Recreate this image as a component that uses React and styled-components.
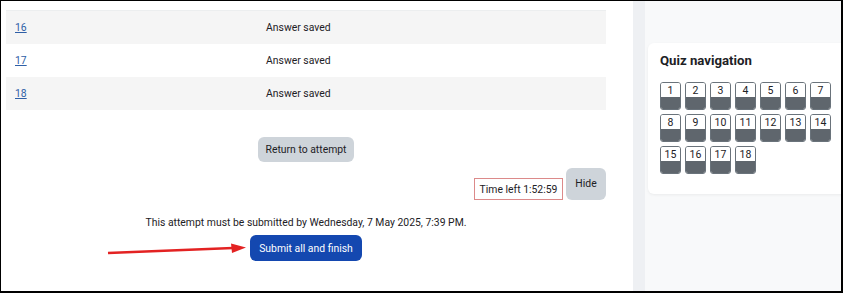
import styled, { createGlobalStyle } from "styled-components";

const GlobalStyle = createGlobalStyle`
  * { box-sizing: border-box; }
  body {
    margin: 0;
    font-family: Roboto, "Liberation Sans", sans-serif;
    color: #1d2125;
  }
`;

const rows = [16, 17, 18];
const questions = Array.from({ length: 18 }, (_, i) => i + 1);

function App() {
  return (
    <>
      <GlobalStyle />
      <Frame>
        <Main>
          <SummaryTable>
            {rows.map((n, i) => (
              <Row key={n} striped={i % 2 === 0}>
                <QuestionCell>
                  <QuestionLink href="#">{n}</QuestionLink>
                </QuestionCell>
                <StatusCell>Answer saved</StatusCell>
              </Row>
            ))}
          </SummaryTable>

          <Centered>
            <SecondaryButton>Return to attempt</SecondaryButton>
          </Centered>

          <TimerRow>
            <TimerBox>Time left 1:52:59</TimerBox>
            <HideButton>Hide</HideButton>
          </TimerRow>

          <Deadline>
            This attempt must be submitted by Wednesday, 7 May 2025, 7:39 PM.
          </Deadline>

          <Centered>
            <PrimaryButton>Submit all and finish</PrimaryButton>
          </Centered>

          <Arrow width="140" height="14" viewBox="0 0 140 14">
            <line x1="1" y1="10" x2="126" y2="5" stroke="#e32222" strokeWidth="2.4" />
            <polygon points="124,0.5 139,4.5 125,10" fill="#e32222" />
          </Arrow>
        </Main>

        <Drawer>
          <NavCard>
            <NavTitle>Quiz navigation</NavTitle>
            <NavGrid>
              {questions.map((q) => (
                <NavButton key={q}>
                  <NavNumber>{q}</NavNumber>
                  <NavState />
                </NavButton>
              ))}
            </NavGrid>
          </NavCard>
        </Drawer>
      </Frame>
    </>
  );
}

/* ---------------- Styled Components ---------------- */

const Frame = styled.div`
  width: 843px;
  height: 293px;
  display: flex;
  border-style: solid;
  border-color: #000;
  border-width: 1px 2px 2px 1px;
  overflow: hidden;
`;

const Main = styled.div`
  position: relative;
  width: 632px;
  flex-shrink: 0;
  background: #fff;
  padding: 9px 27px 0 5px;
  display: flex;
  flex-direction: column;
  font-size: 10.4px;
`;

const SummaryTable = styled.div`
  display: flex;
  flex-direction: column;
  border-top: 1px solid #eceeef;
`;

const Row = styled.div`
  display: grid;
  grid-template-columns: 251px 1fr;
  align-items: center;
  height: 33px;
  background: ${(p) => (p.striped ? "#f5f5f5" : "#fff")};
`;

const QuestionCell = styled.div`
  padding-left: 9px;
`;

const QuestionLink = styled.a`
  color: #2f5fa6;
  text-decoration: underline;
`;

const StatusCell = styled.div`
  padding-left: 9px;
  color: #1d2125;
`;

const Centered = styled.div`
  display: flex;
  justify-content: center;
`;

const SecondaryButton = styled.button`
  margin-top: 27px;
  height: 25px;
  padding: 0 8px;
  border: none;
  border-radius: 6px;
  background: #ced4da;
  color: #1d2125;
  font-family: inherit;
  font-size: 10.4px;
`;

const TimerRow = styled.div`
  display: flex;
  justify-content: flex-end;
  align-items: flex-end;
  gap: 3px;
  margin-top: 6px;
`;

const TimerBox = styled.div`
  height: 22px;
  width: 89px;
  display: flex;
  align-items: center;
  justify-content: center;
  white-space: nowrap;
  border: 1px solid #dc8a8a;
  font-size: 10.4px;
`;

const HideButton = styled.button`
  width: 40px;
  height: 32px;
  border: none;
  border-radius: 6px;
  background: #ced4da;
  color: #1d2125;
  font-family: inherit;
  font-size: 10.4px;
  padding-bottom: 2px;
`;

const Deadline = styled.div`
  margin-top: 14px;
  line-height: 18px;
  text-align: center;
`;

const PrimaryButton = styled.button`
  margin-top: 3px;
  height: 26px;
  padding: 0 9px;
  border: none;
  border-radius: 6px;
  background: #1448b0;
  color: #fff;
  font-family: inherit;
  font-size: 10.4px;
`;

const Arrow = styled.svg`
  position: absolute;
  left: 106px;
  top: 242px;
`;

const Drawer = styled.div`
  flex: 1;
  background: #f8f9fa;
  border-left: 12px solid #eef0f3;
  padding: 42px 0 0 3px;
  overflow: hidden;
`;

const NavCard = styled.div`
  width: 230px;
  height: 151px;
  background: #fff;
  border-radius: 6px;
  box-shadow: 0 1px 3px rgba(0, 0, 0, 0.06);
  padding: 9px 12px 0;
`;

const NavTitle = styled.h3`
  margin: 0 0 12px;
  font-size: 13.2px;
  line-height: 18px;
  font-weight: 700;
  color: #1d2125;
`;

const NavGrid = styled.div`
  display: grid;
  grid-template-columns: repeat(7, 21px);
  gap: 4px;
`;

const NavButton = styled.div`
  height: 28px;
  border: 1px solid #6a737b;
  border-radius: 3px;
  overflow: hidden;
  display: flex;
  flex-direction: column;
`;

const NavNumber = styled.div`
  height: 14px;
  display: flex;
  align-items: center;
  justify-content: center;
  font-size: 10.5px;
  color: #1d2125;
  background: #fff;
`;

const NavState = styled.div`
  flex: 1;
  background: #5f666d;
`;

export default App;
